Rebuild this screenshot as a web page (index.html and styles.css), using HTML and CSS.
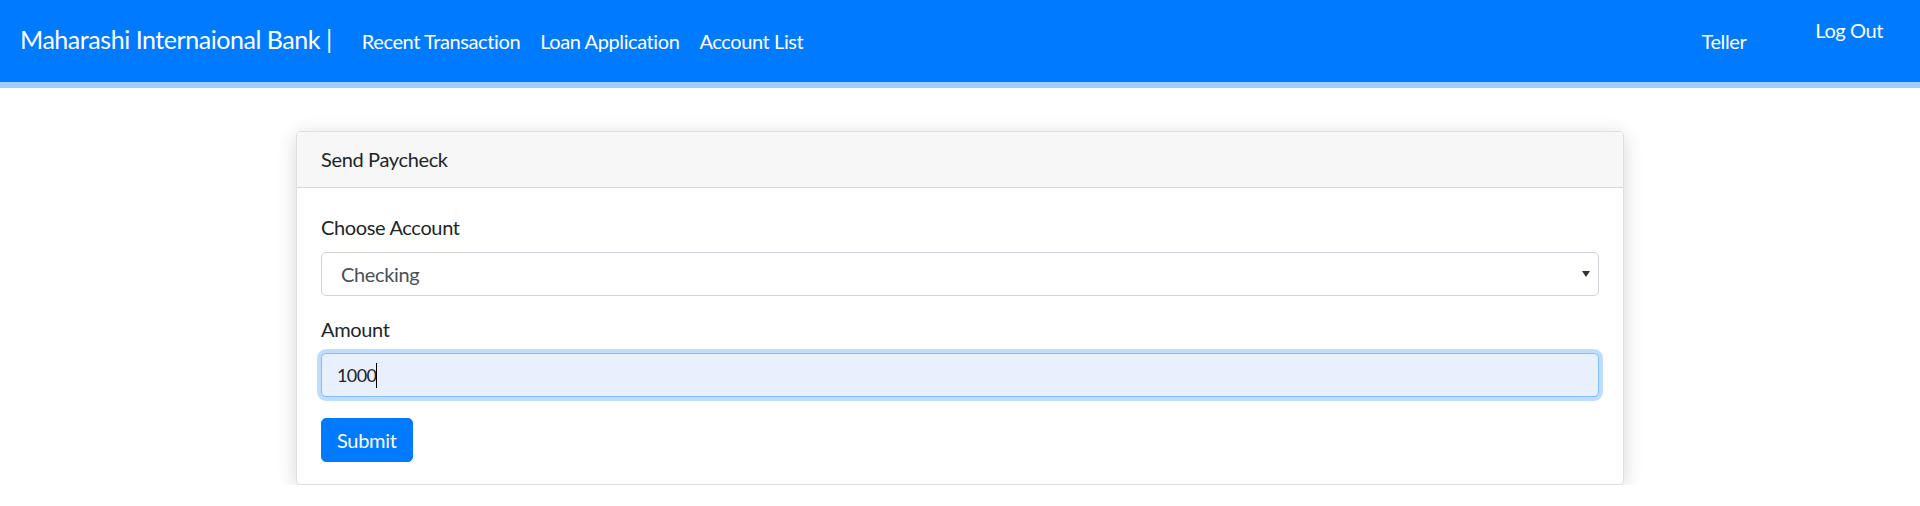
FILE: index.html
```html
<!DOCTYPE html>
<html lang="en">
<head>
<meta charset="utf-8">
<title>Send Paycheck</title>
<link rel="stylesheet" href="styles.css">
</head>
<body>
<nav class="navbar">
  <a class="brand" href="#">Maharashi Internaional Bank |</a>
  <ul class="nav">
    <li><a class="nav-link" href="#">Recent Transaction</a></li>
    <li><a class="nav-link" href="#">Loan Application</a></li>
    <li><a class="nav-link" href="#">Account List</a></li>
  </ul>
  <div class="nav-right">
    <span class="role">Teller</span>
    <a class="logout" href="#">Log Out</a>
  </div>
</nav>
<main class="container">
  <section class="card">
    <div class="card-header">Send Paycheck</div>
    <form class="card-body">
      <div class="form-group">
        <label class="label" for="account">Choose Account</label>
        <div class="select-wrap">
          <select id="account" class="control select">
            <option>Checking</option>
            <option>Savings</option>
          </select>
          <svg class="caret" width="8" height="6" viewBox="0 0 8 6"><path d="M0 0H8L4 6Z" fill="#333"/></svg>
        </div>
      </div>
      <div class="form-group amount-group">
        <label class="label" for="amount">Amount</label>
        <div class="input-wrap">
          <input id="amount" class="control input focused" type="text" value="1000">
          <div class="text-cursor" aria-hidden="true"><span class="ghost">1000</span><span class="cursor-line"></span></div>
        </div>
      </div>
      <button class="btn" type="button">Submit</button>
    </form>
  </section>
</main>
</body>
</html>
```

FILE: styles.css
```css
* { box-sizing: border-box; }
html, body { margin: 0; padding: 0; }
body {
  font-family: Lato, "Open Sans", "Liberation Sans", sans-serif;
  color: #212529;
  background: #fff;
  font-size: 20px;
  letter-spacing: -0.35px;
}
a { text-decoration: none; }

.navbar {
  display: flex;
  align-items: center;
  height: 88px;
  padding: 0 37px 6px 20px;
  background: #007bff;
  border-bottom: 6px solid #9fcdfc;
}
.brand {
  color: #fff;
  font-size: 25px;
  line-height: 37px;
  margin-right: 20px;
  padding-top: 2px;
  letter-spacing: -0.45px;
}
.nav {
  display: flex;
  list-style: none;
  margin: 0;
  padding: 0;
}
.nav-link {
  display: block;
  padding: 5px 10px 0;
  color: #fff;
  font-size: 20px;
  line-height: 30px;
  letter-spacing: -0.4px;
}
.nav-right {
  margin-left: auto;
  display: flex;
  align-items: center;
}
.role {
  color: #fff;
  font-size: 20px;
  line-height: 30px;
  padding-top: 5px;
  letter-spacing: -0.4px;
}
.logout {
  color: #fff;
  font-size: 20px;
  line-height: 30px;
  margin-left: 69px;
  margin-bottom: 16px;
  letter-spacing: -0.4px;
}

.container {
  padding-top: 43px;
  display: flex;
  justify-content: center;
}
.card {
  width: 1328px;
  border: 1px solid rgba(0,0,0,.125);
  border-radius: 5px;
  background: #fff;
  box-shadow: 0 4px 20px rgba(0,0,0,.16);
}
.card-header {
  padding: 12px 24px;
  line-height: 31px;
  background: #f7f7f7;
  border-bottom: 1px solid rgba(0,0,0,.125);
  border-radius: 4px 4px 0 0;
}
.card-body {
  padding: 24px 24px 22px;
  display: flex;
  flex-direction: column;
  align-items: flex-start;
}
.form-group {
  width: 100%;
  margin-bottom: 18px;
}
.amount-group { margin-bottom: 21px; }
.label {
  display: block;
  line-height: 30px;
  margin-bottom: 10px;
}
.amount-group .label { margin-bottom: 9px; }
.control {
  display: block;
  width: 100%;
  height: 44px;
  font-family: inherit;
  font-size: 20px;
  letter-spacing: -0.35px;
  border: 1px solid #ced4da;
  border-radius: 5px;
  background: #fff;
  outline: none;
}
.select-wrap, .input-wrap { position: relative; }
.select {
  appearance: none;
  -webkit-appearance: none;
  padding: 0 19px;
  color: #495057;
}
.caret {
  position: absolute;
  right: 9px;
  top: 19px;
}
.input {
  padding: 0 15px;
  color: #212529;
  font-size: 18px;
  letter-spacing: -0.6px;
}
.focused {
  background: #e8f0fe;
  border-color: #80bdff;
  box-shadow: 0 0 0 4px rgba(0,123,255,.25);
}
.text-cursor {
  position: absolute;
  left: 16px;
  top: 10px;
  display: flex;
  align-items: center;
  height: 25px;
  font-size: 18px;
  letter-spacing: -0.6px;
  pointer-events: none;
}
.ghost { visibility: hidden; }
.cursor-line {
  width: 1px;
  height: 25px;
  background: #000;
}
.btn {
  height: 44px;
  padding: 0 15px;
  font-family: inherit;
  font-size: 20px;
  letter-spacing: -0.3px;
  color: #fff;
  background: #007bff;
  border: 1px solid #007bff;
  border-radius: 5px;
}
```
